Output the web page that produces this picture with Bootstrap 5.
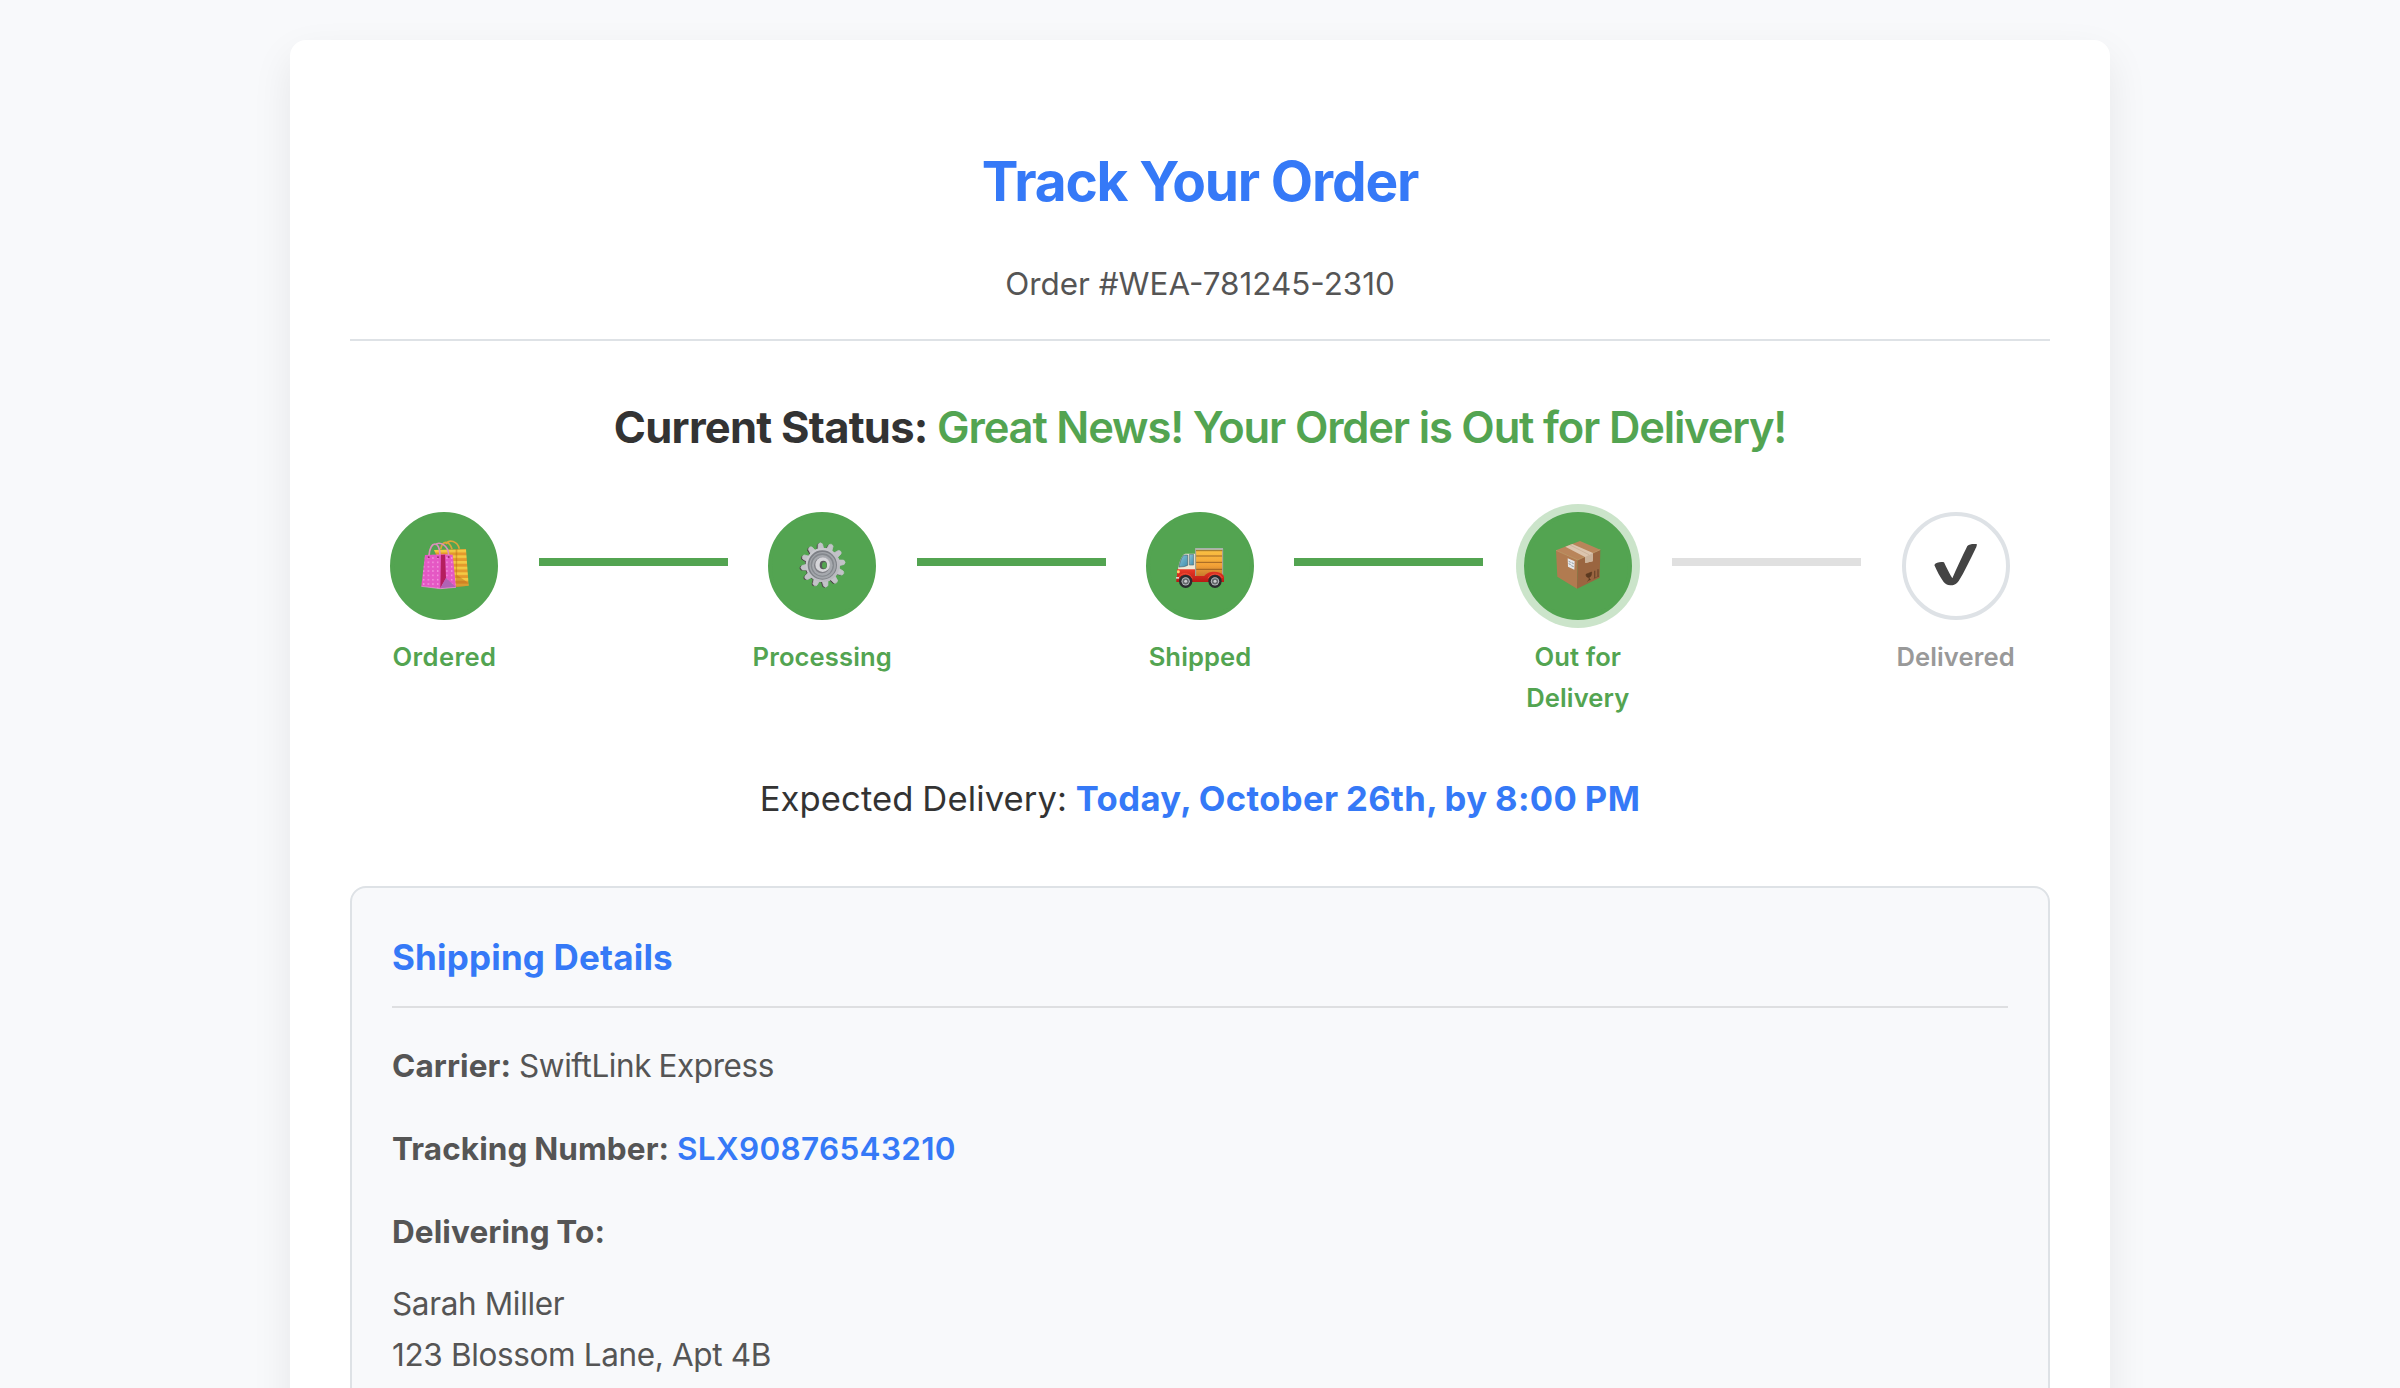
<!DOCTYPE html>
<html lang="en">
<head>
<meta charset="utf-8">
<title>Track Your Order</title>
<link href="https://cdn.jsdelivr.net/npm/bootstrap@5.3.0/dist/css/bootstrap.min.css" rel="stylesheet">
<style>
:root{--brand:#3579f7;--done:#53a451;--ink:#333;--soft:#555;--rule:#dee2e6}
body{font-family:Inter,"Noto Sans",sans-serif;background:#f8f9fb;color:var(--ink);line-height:1.6;height:100vh;overflow:hidden}
.track-card{width:1820px;margin:40px auto 0;padding:96px 60px 60px;border:0;border-radius:16px;box-shadow:0 16px 40px rgba(0,0,0,.08)}
.track-head{padding-bottom:29px;border-bottom:2px solid var(--rule)}
.track-head h1{font-size:55px;line-height:90px;font-weight:700;letter-spacing:-1.18px;color:var(--brand);margin-bottom:33px}
.order-no{font-size:31.4px;line-height:51px;color:var(--soft)}
.status-line{font-size:43.5px;line-height:72px;font-weight:700;letter-spacing:-.75px;margin:50px 0 49px}
.status-line span{color:var(--done);font-weight:600;letter-spacing:-1.18px}
.step{flex:1 1 0;min-width:0}
.link-bar{flex:1 1 0;height:8px;margin-top:46px;background:#e0e0e0}
.link-bar.done{background:var(--done)}
.dot{width:108px;height:108px;border:4px solid var(--rule);border-radius:50%;background:#fff}
.dot svg{width:108px;height:108px;margin:-4px;flex:none}
.step.done .dot{background:var(--done);border-color:var(--done)}
.step.now .dot{box-shadow:0 0 0 8px rgba(83,164,81,.3)}
.step-name{font-size:25.6px;line-height:41px;font-weight:600;letter-spacing:.1px;margin-top:16px;color:#999}
.step.done .step-name{color:var(--done)}
.step-name.wide{letter-spacing:.4px}
.eta{font-size:34.6px;line-height:56px;margin:52px 0 60px;letter-spacing:.1px;word-spacing:-1px}
.eta strong{color:var(--brand);font-weight:700;letter-spacing:.4px}
.ship-box{border:2px solid var(--rule);border-radius:16px;background:#f8f9fb;padding:40px;color:var(--soft);font-size:31.5px;line-height:51.2px}
.ship-box h2{font-size:35px;line-height:58px;font-weight:700;letter-spacing:.18px;color:var(--brand);padding-bottom:20px;border-bottom:2px solid #dedfe1;margin-bottom:32px}
.ship-box p{margin-bottom:32px;word-spacing:-1px}
.ship-box strong{font-weight:700;letter-spacing:.1px}
.ship-box .tight{letter-spacing:-.42px}
.ship-box address{margin-top:20px;line-height:inherit;letter-spacing:-.36px}
.track-no{color:var(--brand);font-weight:600;letter-spacing:.32px;text-decoration:none}
</style>
</head>
<body>
<main class="card track-card">
  <header class="track-head text-center">
    <h1>Track Your Order</h1>
    <div class="order-no">Order #WEA-781245-2310</div>
  </header>
  <h2 class="status-line text-center">Current Status: <span>Great News! Your Order is Out for Delivery!</span></h2>

  <div class="d-flex align-items-start">
    <div class="step done d-flex flex-column align-items-center text-center">
      <div class="dot d-flex">
        <svg viewBox="30 36 324 324">
          <defs>
            <pattern id="dots" width="14" height="13" patternUnits="userSpaceOnUse"><rect width="14" height="13" fill="#e558c4"/><circle cx="5" cy="5" r="2.3" fill="#f7a5e4"/></pattern>
            <pattern id="bands" width="20" height="17" patternUnits="userSpaceOnUse" y="149"><rect width="20" height="17" fill="#e49a2c"/><rect width="20" height="8" fill="#f3c944"/></pattern>
          </defs>
          <path d="M162 150 L258 147 L266 257 L228 261 L205 250 Z" fill="url(#bands)"/>
          <path d="M227 147 L232 147 L231 225 L265 249 L266 257 L228 261 Z" fill="#b5681b" opacity=".45"/>
          <path d="M182 148 C187 120 208 120 216 148 M198 132 C208 116 232 124 238 146" fill="none" stroke="#dda53a" stroke-width="5"/>
          <path d="M135 165 L192 163 L218 164 L228 262 L181 266 L124 259 Z" fill="url(#dots)"/>
          <path d="M183 164 L195 164 L198 234 L181 265 Z" fill="#b51e5e"/>
          <path d="M198 234 L228 262 L181 265 Z" fill="#b063b5"/>
          <path d="M124 259 L181 266 L228 262" fill="none" stroke="#f09bdc" stroke-width="2"/>
          <path d="M147 166 C151 121 179 121 180 164 M165 134 C178 124 205 133 206 166" fill="none" stroke="#dd8fbd" stroke-width="5"/>
          <circle cx="146" cy="172" r="3" fill="#9c2c6f"/><circle cx="174" cy="172" r="3" fill="#9c2c6f"/><circle cx="206" cy="171" r="3" fill="#9c2c6f"/>
        </svg>
      </div>
      <div class="step-name wide">Ordered</div>
    </div>
    <div class="link-bar done"></div>
    <div class="step done d-flex flex-column align-items-center text-center">
      <div class="dot d-flex">
        <svg viewBox="24 36 324 324">
          <defs>
            <linearGradient id="steel" x1="0" y1="0" x2="1" y2="1"><stop offset="0" stop-color="#cfd0d4"/><stop offset="1" stop-color="#b4b5ba"/></linearGradient>
            <path id="tooth" d="M179 152 L182 132 Q189 124 195 132 L198 152 Z"/>
            <g id="cog">
              <use href="#tooth" transform="rotate(-7 189 195)"/><use href="#tooth" transform="rotate(23 189 195)"/><use href="#tooth" transform="rotate(53 189 195)"/><use href="#tooth" transform="rotate(83 189 195)"/><use href="#tooth" transform="rotate(113 189 195)"/><use href="#tooth" transform="rotate(143 189 195)"/><use href="#tooth" transform="rotate(173 189 195)"/><use href="#tooth" transform="rotate(203 189 195)"/><use href="#tooth" transform="rotate(233 189 195)"/><use href="#tooth" transform="rotate(263 189 195)"/><use href="#tooth" transform="rotate(293 189 195)"/><use href="#tooth" transform="rotate(323 189 195)"/>
              <circle cx="189" cy="195" r="50"/>
            </g>
          </defs>
          <use href="#cog" fill="#4d4548" transform="translate(-4 1.500)"/>
          <use href="#cog" fill="#c2c3c8" stroke="#c2c3c8" stroke-width="2"/>
          <circle cx="188" cy="195" r="51" fill="url(#steel)"/>
          <circle cx="187" cy="195" r="44" fill="#7d8086"/>
          <circle cx="188" cy="196" r="40" fill="#a2a5aa"/>
          <circle cx="187" cy="195" r="35" fill="#85898e"/>
          <circle cx="187" cy="196" r="31" fill="#a6a9ae"/>
          <circle cx="186" cy="196" r="24" fill="#808187"/>
          <circle cx="188" cy="194" r="22" fill="#d6d6da"/>
          <ellipse cx="190" cy="195" rx="11" ry="13" fill="#58595c"/>
          <ellipse cx="193" cy="196" rx="7" ry="10" fill="#53a451"/>
        </svg>
      </div>
      <div class="step-name">Processing</div>
    </div>
    <div class="link-bar done"></div>
    <div class="step done d-flex flex-column align-items-center text-center">
      <div class="dot d-flex">
        <svg viewBox="33 36 324 324">
          <defs>
            <linearGradient id="cargo" x1="0" y1="0" x2="0" y2="1"><stop offset="0" stop-color="#fbc544"/><stop offset=".6" stop-color="#f3a237"/><stop offset="1" stop-color="#c77a2c"/></linearGradient>
            <linearGradient id="glass" x1="0" y1="0" x2="1" y2="1"><stop offset="0" stop-color="#8cc4d8"/><stop offset="1" stop-color="#3f8fae"/></linearGradient>
            <linearGradient id="paint" x1="0" y1="0" x2="0" y2="1"><stop offset="0" stop-color="#ea3a28"/><stop offset="1" stop-color="#b81a14"/></linearGradient>
          </defs>
          <rect x="181" y="145" width="83" height="84" fill="url(#cargo)"/>
          <path d="M183 168H262M183 187H262M183 208H262" stroke="#8c5420" stroke-width="2.500"/>
          <path d="M182 228V146H263V226" fill="none" stroke="#9ea3a2" stroke-width="3"/>
          <path d="M181 147H264" stroke="#a8b5b0" stroke-width="5"/>
          <path d="M183 152H262" stroke="#6b4a20" stroke-width="2"/>
          <path d="M129 209 C131 190 140 163 151 161 H180 V212 H129Z" fill="#efe9d6"/>
          <path d="M132 200 C136 180 143 165 149 165 H158 V196 Q150 201 132 201Z" fill="url(#glass)" stroke="#47616a" stroke-width="2"/>
          <path d="M163 163H176V195H163Z" fill="url(#glass)" stroke="#5c7379" stroke-width="2"/>
          <path d="M126 208 H180 V228 H208 C218 211 256 211 265 226 L267 231 V246 H124 V230 H126Z" fill="url(#paint)"/>
          <path d="M131 232 C138 217 164 217 172 235 M219 235 C226 218 254 218 262 234" fill="none" stroke="#f0503a" stroke-width="3"/>
          <rect x="126" y="211" width="8" height="9" rx="3" fill="#ffcf6d"/>
          <path d="M123 231H132V236H123Z" fill="#d9d4cc"/>
          <g fill="#292b2e"><circle cx="152" cy="244" r="20"/><circle cx="240" cy="244" r="20"/></g>
          <g fill="#b8bcc0"><circle cx="152" cy="244" r="12.500"/><circle cx="240" cy="244" r="12.500"/></g>
          <g fill="#63676b"><circle cx="152" cy="244" r="9.500"/><circle cx="240" cy="244" r="9.500"/></g>
          <g fill="#c9ccce"><circle cx="152" cy="244" r="4.500"/><circle cx="240" cy="244" r="4.500"/></g>
        </svg>
      </div>
      <div class="step-name">Shipped</div>
    </div>
    <div class="link-bar done"></div>
    <div class="step done now d-flex flex-column align-items-center text-center">
      <div class="dot d-flex">
        <svg viewBox="42 42 324 324">
          <path d="M138 157 L203 186 L201 272 L142 236Z" fill="#b17b50"/>
          <path d="M203 186 L271 155 L269 239 L201 272Z" fill="#9a6540"/>
          <path d="M138 157 L210 129 L271 155 L203 186Z" fill="#b9855a"/>
          <path d="M138 157 L203 186 L271 155" fill="none" stroke="#c9976b" stroke-width="2"/>
          <path d="M166 146 L187 138 L249 165 L248 190 L226 195 L225 177Z" fill="#dcc5ae"/>
          <path d="M225 177 L249 165 L248 190 L226 195Z" fill="#cbb39b"/>
          <path d="M180 141 L237 170" stroke="#c7ab91" stroke-width="2"/>
          <path d="M173 181 L194 190 L193 215 L174 206Z" fill="#e6e8ea"/>
          <path d="M176 190 L182 193 M185 194 L191 197 M176 197 L182 200 M184 203 L191 206" stroke="#8e989f" stroke-width="3"/>
          <path d="M228 229 L245 222 C245 234 241 237 237 238 V246 L242 245 M237 238 C231 239 228 236 228 229 M237 246 L232 250" fill="#5b3920" stroke="#5b3920" stroke-width="2"/>
          <path d="M254 218 V240 M264 214 V236" stroke="#6e472b" stroke-width="4"/>
          <path d="M251 242 L267 234" stroke="#6e472b" stroke-width="2"/>
        </svg>
      </div>
      <div class="step-name">Out for<br>Delivery</div>
    </div>
    <div class="link-bar"></div>
    <div class="step d-flex flex-column align-items-center text-center">
      <div class="dot d-flex">
        <svg viewBox="51 36 324 324">
          <path d="M148 195 C153 187 166 185 177 187 C184 202 193 221 202 235 C214 207 232 169 247 138 C254 132 266 131 276 133 C275 140 273 144 270 149 C254 181 238 216 221 243 C213 254 205 256 196 256 C186 255 181 252 176 246 C165 231 156 213 148 195Z" fill="#444"/>
        </svg>
      </div>
      <div class="step-name">Delivered</div>
    </div>
  </div>

  <div class="eta text-center">Expected Delivery: <strong>Today, October 26th, by 8:00 PM</strong></div>

  <section class="ship-box">
    <h2>Shipping Details</h2>
    <p><strong>Carrier:</strong> <span class="tight">SwiftLink Express</span></p>
    <p><strong>Tracking Number:</strong> <a class="track-no" href="#">SLX90876543210</a></p>
    <p class="mb-0"><strong>Delivering To:</strong></p>
    <address class="mb-0">Sarah Miller<br>123 Blossom Lane, Apt 4B</address>
  </section>
</main>
<script src="https://cdn.jsdelivr.net/npm/bootstrap@5.3.0/dist/js/bootstrap.bundle.min.js"></script>
</body>
</html>
